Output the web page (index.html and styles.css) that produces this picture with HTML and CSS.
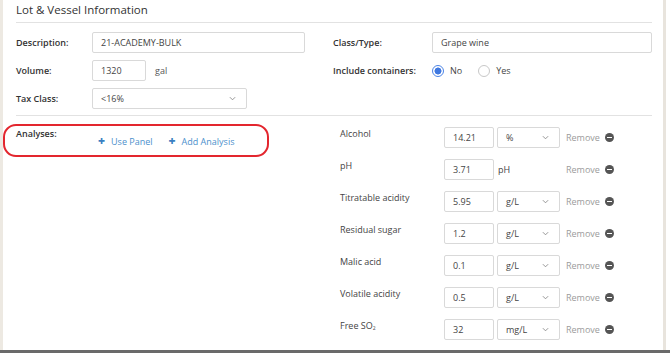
FILE: index.html
```html
<!DOCTYPE html>
<html>
<head>
<meta charset="utf-8">
<link rel="stylesheet" href="styles.css">
</head>
<body>
<div class="screen">
  <div class="main">
    <div class="edge-left"></div>
    <div class="panel">
      <div class="title">Lot &amp; Vessel Information</div>
      <div class="top-grid">
        <div class="col">
          <div class="row"><span class="lbl lbl-l">Description:</span><span class="box w-desc">21-ACADEMY-BULK</span></div>
          <div class="row"><span class="lbl lbl-l">Volume:</span><span class="box w-vol">1320</span><span class="unit-gal">gal</span></div>
          <div class="row"><span class="lbl lbl-l">Tax Class:</span><span class="box sel w-tax">&lt;16%<svg class="chev" viewBox="0 0 8 5"><path d="M1 1 L4 4 L7 1" fill="none" stroke="#888" stroke-width="1"/></svg></span></div>
        </div>
        <div class="col">
          <div class="row"><span class="lbl lbl-r">Class/Type:</span><span class="box grow">Grape wine</span></div>
          <div class="row"><span class="lbl lbl-r">Include containers:</span>
            <span class="radio on"></span><span class="rtext">No</span>
            <span class="radio"></span><span class="rtext">Yes</span>
          </div>
        </div>
      </div>
      <div class="an-grid">
        <div class="an-left">
          <div class="an-note"></div>
          <span class="lbl an-lbl">Analyses:</span>
          <div class="links">
            <span class="link"><span class="plus">+</span>Use Panel</span>
            <span class="link"><span class="plus">+</span>Add Analysis</span>
          </div>
        </div>
        <div class="an-list">
          <div class="an-row"><span class="an-name">Alcohol</span><span class="box w-val">14.21</span><span class="box sel w-unit">%<svg class="chev" viewBox="0 0 8 5"><path d="M1 1 L4 4 L7 1" fill="none" stroke="#888" stroke-width="1"/></svg></span><span class="remove">Remove</span><span class="minus"></span></div>
          <div class="an-row"><span class="an-name">pH</span><span class="box w-val">3.71</span><span class="unit-text">pH</span><span class="remove">Remove</span><span class="minus"></span></div>
          <div class="an-row"><span class="an-name">Titratable acidity</span><span class="box w-val">5.95</span><span class="box sel w-unit">g/L<svg class="chev" viewBox="0 0 8 5"><path d="M1 1 L4 4 L7 1" fill="none" stroke="#888" stroke-width="1"/></svg></span><span class="remove">Remove</span><span class="minus"></span></div>
          <div class="an-row"><span class="an-name">Residual sugar</span><span class="box w-val">1.2</span><span class="box sel w-unit">g/L<svg class="chev" viewBox="0 0 8 5"><path d="M1 1 L4 4 L7 1" fill="none" stroke="#888" stroke-width="1"/></svg></span><span class="remove">Remove</span><span class="minus"></span></div>
          <div class="an-row"><span class="an-name">Malic acid</span><span class="box w-val">0.1</span><span class="box sel w-unit">g/L<svg class="chev" viewBox="0 0 8 5"><path d="M1 1 L4 4 L7 1" fill="none" stroke="#888" stroke-width="1"/></svg></span><span class="remove">Remove</span><span class="minus"></span></div>
          <div class="an-row"><span class="an-name">Volatile acidity</span><span class="box w-val">0.5</span><span class="box sel w-unit">g/L<svg class="chev" viewBox="0 0 8 5"><path d="M1 1 L4 4 L7 1" fill="none" stroke="#888" stroke-width="1"/></svg></span><span class="remove">Remove</span><span class="minus"></span></div>
          <div class="an-row"><span class="an-name">Free SO<sub>2</sub></span><span class="box w-val">32</span><span class="box sel w-unit">mg/L<svg class="chev" viewBox="0 0 8 5"><path d="M1 1 L4 4 L7 1" fill="none" stroke="#888" stroke-width="1"/></svg></span><span class="remove">Remove</span><span class="minus"></span></div>
        </div>
      </div>
    </div>
    <div class="edge-right"></div>
    <div class="outside"></div>
  </div>
  <div class="bottom-bar"></div>
</div>
</body>
</html>
```

FILE: styles.css
```css
* { box-sizing: border-box; }
html, body { margin: 0; padding: 0; background: #fff; }
body {
  font-family: "Open Sans", "Liberation Sans", sans-serif;
  color: #333;
  font-size: 9px;
}
.screen { width: 670px; height: 353px; display: flex; flex-direction: column; overflow: hidden; }
.main { flex: 1; display: flex; min-height: 0; }
.edge-left { width: 3px; background: #ede9e2; }
.panel { flex: 1; padding: 0 11px 0 13px; background: #fff; overflow: hidden; }
.edge-right { width: 3px; background: #e8e4dd; }
.outside { width: 4px; background: #fff; }
.bottom-bar { height: 3px; background: #6a6a6a; }

.title {
  height: 23px;
  line-height: 20px;
  font-size: 11.5px;
  color: #333;
  border-bottom: 1px solid #e2e2e2;
}

.top-grid {
  display: grid;
  grid-template-columns: 317px 1fr;
  padding: 9px 0 6px;
  border-bottom: 1px solid #e2e2e2;
}
.col { display: flex; flex-direction: column; gap: 7px; }
.row { display: flex; align-items: center; height: 21px; }
.lbl { font-weight: 600; color: #333; }
.lbl-l { width: 76px; }
.lbl-r { width: 99px; }

.box {
  display: flex;
  align-items: center;
  height: 21px;
  border: 1px solid #d9d9d9;
  border-radius: 2px;
  padding: 0 8px;
  color: #444;
  background: #fff;
  position: relative;
}
.w-desc { width: 213px; }
.w-vol { width: 54px; }
.w-tax { width: 155px; }
.grow { flex: 1; }
.unit-gal { margin-left: 9px; color: #555; }
.sel { justify-content: space-between; }
.chev { width: 7px; height: 5px; margin-right: 2px; }

.radio {
  width: 12px; height: 12px;
  border: 1px solid #c8c8c8;
  border-radius: 50%;
  background: #fff;
  display: inline-block;
}
.radio.on {
  border-color: #4c84e6;
  background: radial-gradient(circle, #3f78e0 0 3.2px, #fff 3.8px);
}
.rtext { margin-left: 6px; margin-right: 16px; color: #444; }

.an-grid {
  display: grid;
  grid-template-columns: 317px 1fr;
  padding-top: 11px;
}
.an-left { position: relative; display: flex; align-items: flex-start; }
.an-lbl { width: 82px; line-height: 13px; }
.an-note {
  position: absolute;
  left: -13px;
  top: -3px;
  width: 266px;
  height: 33px;
  border: 2px solid #e3262e;
  border-radius: 13px;
}
.links { display: flex; margin-top: 7px; line-height: 13px; }
.link { color: #4b8fcc; margin-right: 16px; }
.plus { font-weight: 800; color: #3a7fc2; margin-right: 6px; font-size: 12px; line-height: 13px; }

.an-list { display: flex; flex-direction: column; gap: 11px; padding-left: 7px; }
.an-row { display: flex; align-items: flex-start; height: 21px; }
.an-name { width: 104px; line-height: 13px; color: #444; }
.an-name sub { font-size: 5px; vertical-align: -1px; }
.w-val { width: 50px; }
.w-unit { width: 63px; margin-left: 3px; }
.unit-text { width: 63px; margin-left: 3px; line-height: 21px; padding-left: 1px; color: #444; }
.remove { margin-left: 6px; line-height: 21px; color: #9b9b9b; }
.minus {
  width: 9px; height: 9px;
  border-radius: 50%;
  background: #555;
  margin: 6px 0 0 5px;
  position: relative;
}
.minus::after {
  content: "";
  position: absolute;
  left: 2px; right: 2px; top: 4px;
  height: 1.4px;
  background: #fff;
}
```
